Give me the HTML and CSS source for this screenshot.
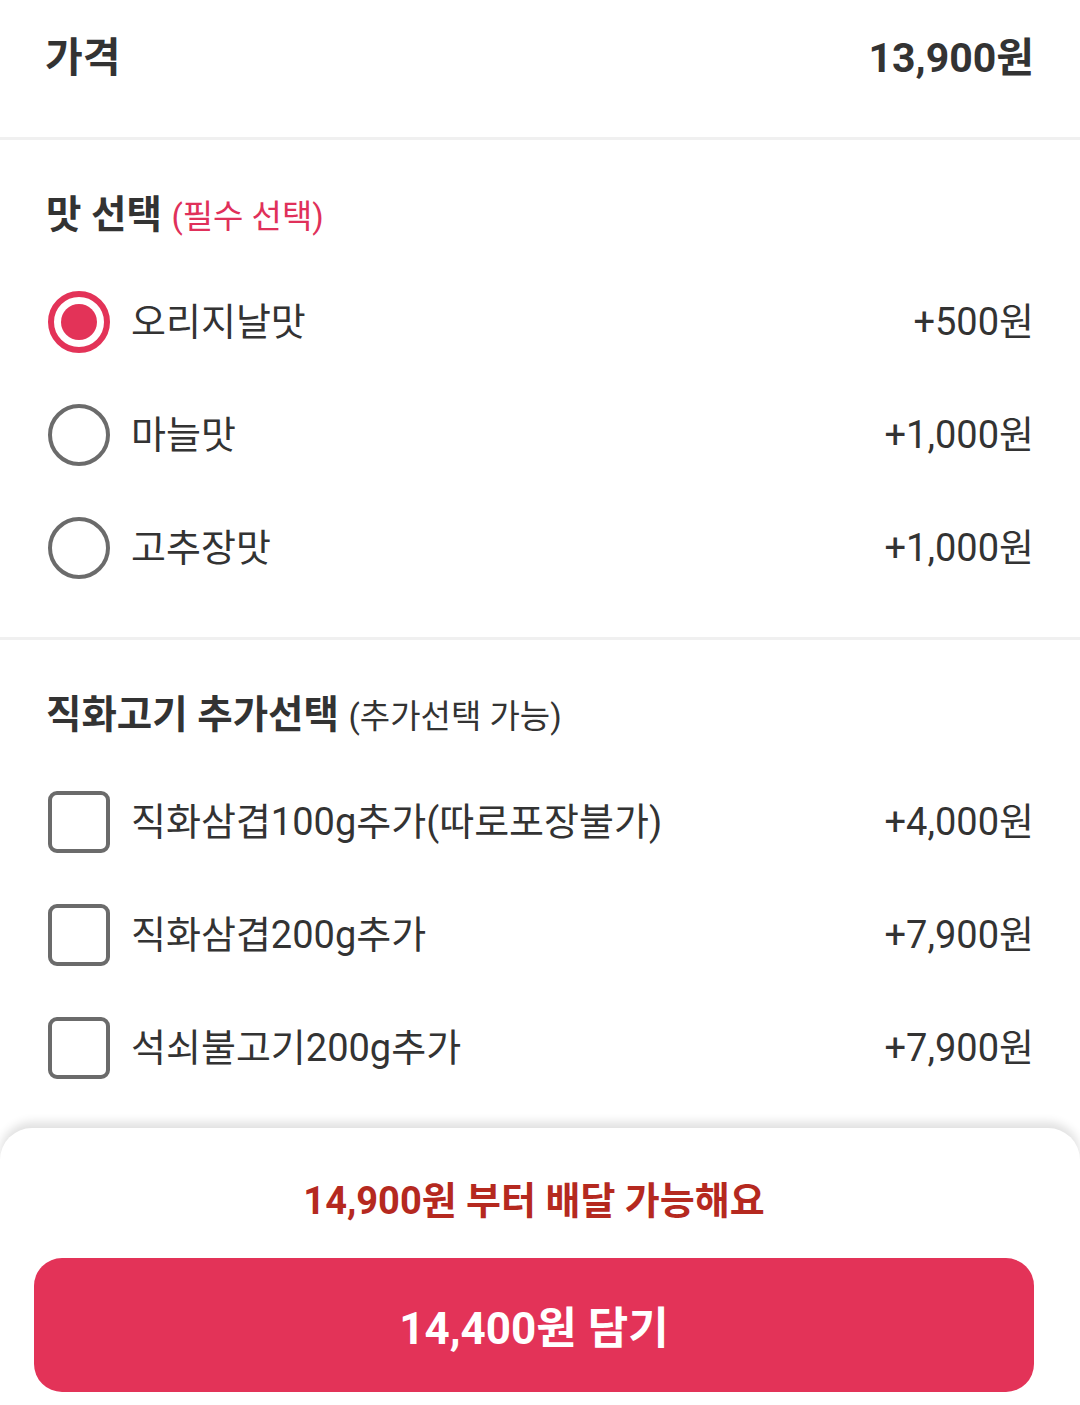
FILE: index.html
```html
<!DOCTYPE html>
<html lang="ko">
<head>
<meta charset="utf-8">
<link rel="stylesheet" href="styles.css">
</head>
<body>
<div class="page">
  <div class="price-row">
    <span class="price-label">가격</span>
    <span class="price-value">13,900원</span>
  </div>
  <div class="divider"></div>

  <section class="section section-first">
    <h2 class="section-title">맛 선택 <span class="req">(필수 선택)</span></h2>
    <ul class="options">
      <li class="option">
        <span class="radio radio-on"><span class="radio-dot"></span></span>
        <span class="opt-name">오리지날맛</span>
        <span class="opt-price">+500원</span>
      </li>
      <li class="option">
        <span class="radio"></span>
        <span class="opt-name">마늘맛</span>
        <span class="opt-price">+1,000원</span>
      </li>
      <li class="option">
        <span class="radio"></span>
        <span class="opt-name">고추장맛</span>
        <span class="opt-price">+1,000원</span>
      </li>
    </ul>
  </section>
  <div class="divider"></div>

  <section class="section section-second">
    <h2 class="section-title">직화고기 추가선택 <span class="opt">(추가선택 가능)</span></h2>
    <ul class="options">
      <li class="option">
        <span class="check"></span>
        <span class="opt-name">직화삼겹100g추가(따로포장불가)</span>
        <span class="opt-price">+4,000원</span>
      </li>
      <li class="option">
        <span class="check"></span>
        <span class="opt-name">직화삼겹200g추가</span>
        <span class="opt-price">+7,900원</span>
      </li>
      <li class="option">
        <span class="check"></span>
        <span class="opt-name">석쇠불고기200g추가</span>
        <span class="opt-price">+7,900원</span>
      </li>
    </ul>
  </section>

  <div class="sheet">
    <p class="min-order">14,900원 부터 배달 가능해요</p>
    <button class="cta">14,400원 담기</button>
  </div>
</div>
</body>
</html>
```

FILE: styles.css
```css
* { box-sizing: border-box; }
html, body { margin: 0; padding: 0; background: #fff; }
body {
  font-family: Roboto, "Noto Sans CJK KR", sans-serif;
  color: #333;
  width: 1080px;
  height: 1405px;
  overflow: hidden;
}
.page { display: flex; flex-direction: column; }

.price-row {
  display: flex;
  justify-content: space-between;
  align-items: center;
  padding: 36px 46px 57px 45px;
  height: 137px;
}
.price-label, .price-value {
  font-size: 41px;
  font-weight: 700;
  line-height: 44px;
}

.divider { height: 3px; background: #f0f0f0; }

.section { padding: 52px 46px 33px 48px; }
.section-second { padding-bottom: 0; }
.section-title {
  margin: 0 0 0 -2px;
  font-size: 38.5px;
  line-height: 46px;
  font-weight: 700;
  color: #333;
}
.section-title .req {
  font-size: 33px;
  font-weight: 400;
  color: #e0305a;
}
.section-title .opt {
  font-size: 33px;
  font-weight: 400;
  color: #333;
}

.options { list-style: none; margin: 25px 0 0; padding: 0; }
.option {
  display: flex;
  align-items: center;
  height: 113px;
}
.opt-name {
  flex: 1;
  margin-left: 21px;
  font-size: 38px;
  line-height: 46px;
}
.opt-price {
  font-size: 38px;
  line-height: 46px;
}

.radio {
  width: 62px;
  height: 62px;
  border-radius: 50%;
  border: 4.5px solid #6b6b6b;
  display: flex;
  align-items: center;
  justify-content: center;
  flex: none;
}
.radio-on { border: 6px solid #e33358; }
.radio-dot {
  width: 36px;
  height: 36px;
  border-radius: 50%;
  background: #e33358;
}
.check {
  width: 62px;
  height: 62px;
  border: 4.5px solid #6b6b6b;
  border-radius: 9px;
  flex: none;
}

.sheet {
  margin-top: 24px;
  height: 278px;
  border-radius: 32px 32px 0 0;
  box-shadow: 0 -6px 10px rgba(0,0,0,0.12);
  background: #fff;
  padding: 50px 46px 13px 34px;
  display: flex;
  flex-direction: column;
  align-items: center;
}
.min-order {
  margin: 0;
  font-size: 38px;
  line-height: 46px;
  font-weight: 700;
  color: #b5291f;
}
.cta {
  margin-top: 34px;
  width: 1000px;
  height: 134px;
  border: none;
  border-radius: 28px;
  background: #e33358;
  color: #fff;
  font-family: Roboto, "Noto Sans CJK KR", sans-serif;
  font-size: 44px;
  font-weight: 700;
}
```
